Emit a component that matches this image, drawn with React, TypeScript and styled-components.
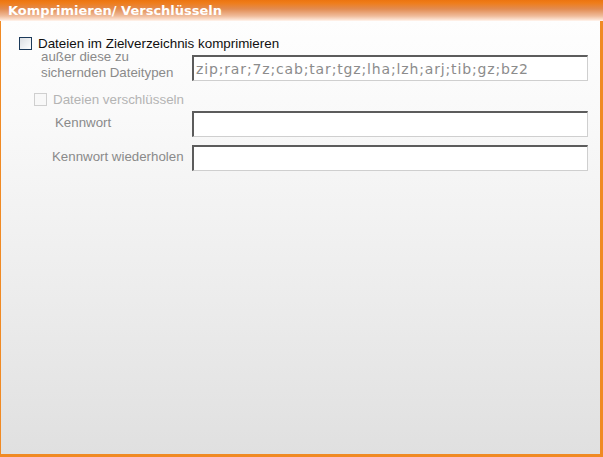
import React from "react";
import styled, { createGlobalStyle } from "styled-components";

const Global = createGlobalStyle`
  html, body { margin: 0; padding: 0; background: #fff; }
  body { font-family: "Liberation Sans", Arial, sans-serif; }
`;

const Frame = styled.div`
  width: 603px;
  height: 457px;
  box-sizing: border-box;
  border-left: 1px solid #f08a24;
  border-right: 3px solid #f08a24;
  border-bottom: 3px solid #f08a24;
  display: flex;
  flex-direction: column;
  background: linear-gradient(to bottom, #ffffff 0px, #f9f9f9 120px, #ececec 300px, #e0e0e0 454px);
`;

const Header = styled.div`
  height: 21px;
  flex: none;
  margin-left: -1px;
  margin-right: -3px;
  padding-left: 8px;
  display: flex;
  align-items: center;
  background: linear-gradient(to bottom, #ec7410 0px, #ef7d1a 3px, #e28c52 9px, #f0bc9b 16px, #fde6d8 20px, #fff7f2 21px);
  font-family: "DejaVu Sans", Verdana, sans-serif;
  font-weight: bold;
  font-size: 13px;
  color: #ffffff;
`;

const Body = styled.div`
  display: flex;
  flex-direction: column;
  padding: 14px 0 0 17px;
`;

const CheckRow = styled.label<{ $indent: number; $top: number; $disabled?: boolean }>`
  display: flex;
  align-items: center;
  gap: 6px;
  margin-left: ${(p) => p.$indent}px;
  margin-top: ${(p) => p.$top}px;
  height: 16px;
  font-size: 13.4px;
  color: ${(p) => (p.$disabled ? "#b4b4b4" : "#101010")};
`;

const Box = styled.span<{ $disabled?: boolean }>`
  width: 11px;
  height: 11px;
  border: 1px solid ${(p) => (p.$disabled ? "#cfcfcf" : "#1c3a5a")};
  background: ${(p) =>
    p.$disabled ? "#f8f8f8" : "linear-gradient(135deg, #dcdfe3, #ffffff)"};
  flex: none;
`;

const FieldRow = styled.div<{ $top: number }>`
  display: grid;
  grid-template-columns: 174px 396px;
  align-items: center;
  margin-top: ${(p) => p.$top}px;
`;

const FieldLabel = styled.div<{ $pad: number; $lift?: number; $top?: boolean }>`
  padding-left: ${(p) => p.$pad}px;
  margin-top: ${(p) => -(p.$lift ?? 0)}px;
  align-self: ${(p) => (p.$top ? "start" : "center")};
  font-size: 13.3px;
  line-height: 16px;
  color: #8a8a8a;
  white-space: nowrap;
`;

const Input = styled.div`
  height: 26px;
  box-sizing: border-box;
  border-top: 2px solid #5c5c5c;
  border-left: 2px solid #5c5c5c;
  border-bottom: 1px solid #cfcfcf;
  border-right: 1px solid #cfcfcf;
  background: #ffffff;
  display: flex;
  align-items: center;
  padding-left: 2px;
  font-family: "DejaVu Sans", Verdana, sans-serif;
  font-size: 14px;
  letter-spacing: 0.85px;
  color: #8c8c8c;
`;

export default function App() {
  return (
    <>
      <Global />
      <Frame>
        <Header>Komprimieren/ Verschlüsseln</Header>
        <Body>
          <CheckRow $indent={1} $top={0}>
            <Box />
            Dateien im Zielverzeichnis komprimieren
          </CheckRow>
          <FieldRow $top={4}>
            <FieldLabel $pad={23} $lift={6} $top>
              außer diese zu
              <br />
              sichernden Dateitypen
            </FieldLabel>
            <Input>zip;rar;7z;cab;tar;tgz;lha;lzh;arj;tib;gz;bz2</Input>
          </FieldRow>
          <CheckRow $indent={16} $top={10} $disabled>
            <Box $disabled />
            Dateien verschlüsseln
          </CheckRow>
          <FieldRow $top={4}>
            <FieldLabel $pad={37} $lift={3}>Kennwort</FieldLabel>
            <Input />
          </FieldRow>
          <FieldRow $top={8}>
            <FieldLabel $pad={34} $lift={2}>Kennwort wiederholen</FieldLabel>
            <Input />
          </FieldRow>
        </Body>
      </Frame>
    </>
  );
}
